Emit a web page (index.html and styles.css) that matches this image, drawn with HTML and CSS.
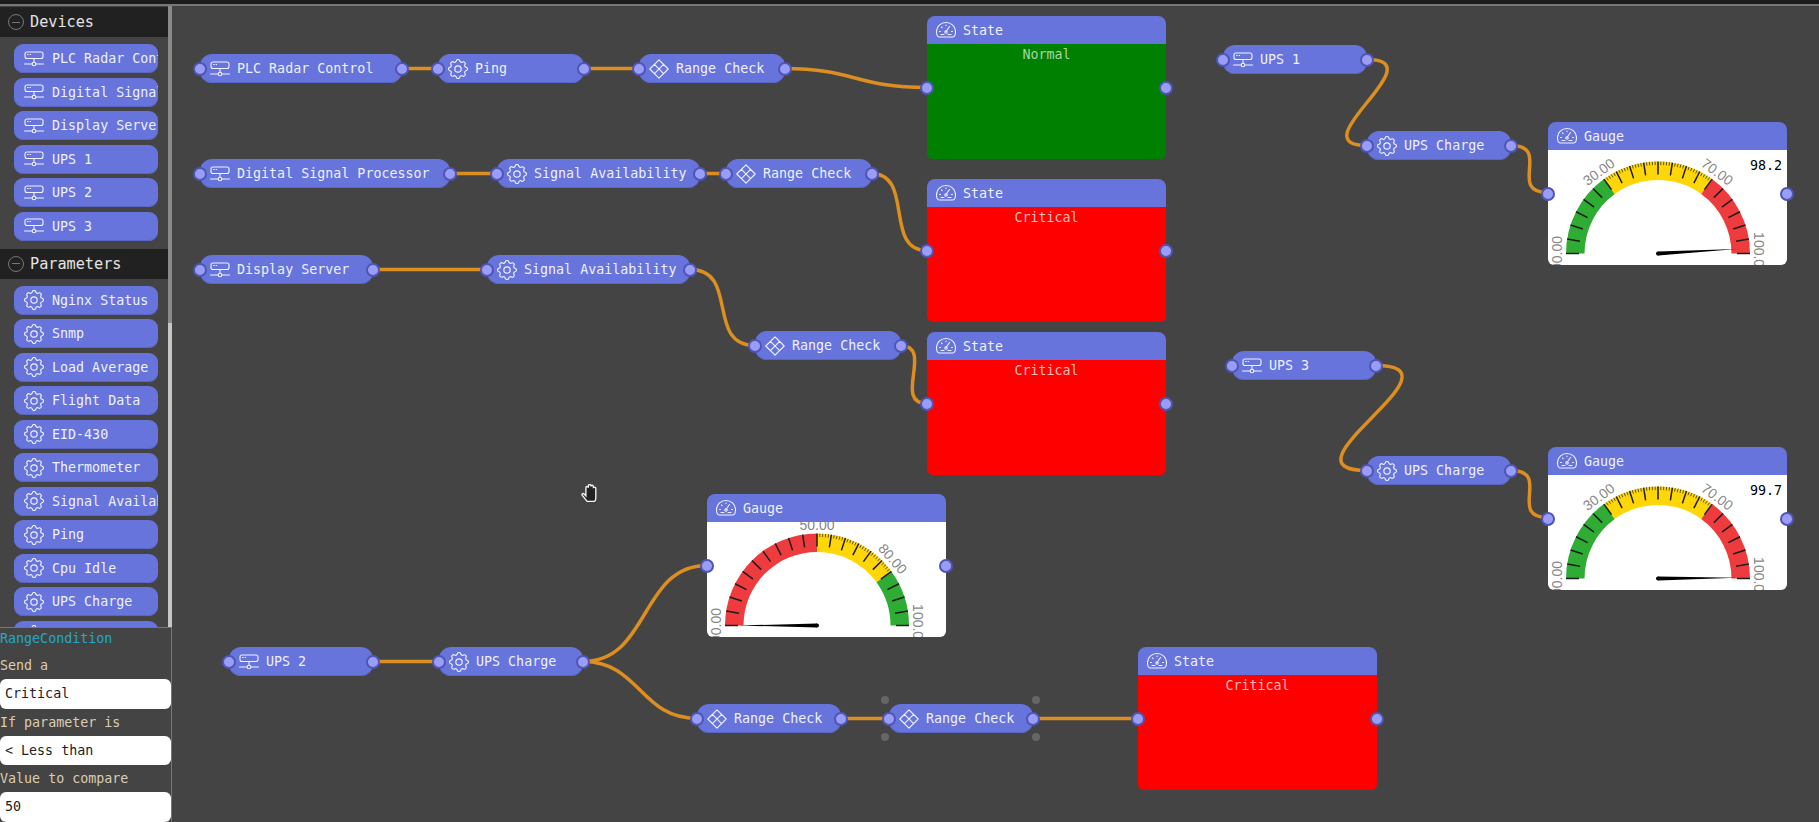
FILE: index.html
```html
<!DOCTYPE html>
<html lang="en">
<head>
    <meta charset="UTF-8">
    <title>Flow Editor</title>
    <link rel="stylesheet" href="styles.css">
</head>
<body>
    <!-- shared icons -->
    <svg class="icon-defs" aria-hidden="true">
        <symbol id="i-server" viewBox="0 0 20 20">
            <rect x="1" y="3" width="18" height="6.5" rx="2"/>
            <path d="M3.5 5.5h.6M6 5.5h.6M10 9.5v4M.5 15H8M12 15h7.5"/>
            <circle cx="10" cy="15" r="1.8"/>
        </symbol>
        <symbol id="i-gear" viewBox="2.5 2.5 19 19">
            <path d="M10.325 4.317c.426-1.756 2.924-1.756 3.35 0a1.724 1.724 0 0 0 2.573 1.066c1.543-.94 3.31.826 2.37 2.37a1.724 1.724 0 0 0 1.065 2.572c1.756.426 1.756 2.924 0 3.35a1.724 1.724 0 0 0-1.066 2.573c.94 1.543-.826 3.31-2.37 2.37a1.724 1.724 0 0 0-2.572 1.065c-.426 1.756-2.924 1.756-3.35 0a1.724 1.724 0 0 0-2.573-1.066c-1.543.94-3.31-.826-2.37-2.37a1.724 1.724 0 0 0-1.065-2.572c-1.756-.426-1.756-2.924 0-3.35a1.724 1.724 0 0 0 1.066-2.573c-.94-1.543.826-3.31 2.37-2.37c1 .608 2.296.07 2.572-1.065z"/>
            <circle cx="12" cy="12" r="3"/>
        </symbol>
        <symbol id="i-range" viewBox="0 0 20 20">
            <path d="M10 .8L19.2 10L10 19.2L.8 10zM5.4 5.4L14.6 14.6M14.6 5.4L5.4 14.6"/>
        </symbol>
        <symbol id="i-gauge" viewBox="0 0 20 20">
            <path d="M3.5 17H16.5C18.5 17 19.5 14 19.5 11.5A9.5 9 0 0 0 .5 11.5C.5 14 1.5 17 3.5 17z"/>
            <path d="M10 11.5L13.5 6.5M3.5 11.5h1M15.5 11.5h1M5.5 7l.6.6M10 5v.6M5 14.5h3M12 14.5h3"/>
            <circle cx="10" cy="12" r="1.2"/>
        </symbol>
    </svg>

    <div class="topbar"></div>

    <div class="workspace">
        <div class="side">
            <div class="palette">
                <div class="palette-list">
                    <div class="group-head"><span class="collapse"></span>Devices</div>
                    <div class="group-items">
                        <div class="item"><svg class="icon"><use href="#i-server"/></svg><span>PLC Radar Control</span></div>
                        <div class="item"><svg class="icon"><use href="#i-server"/></svg><span>Digital Signal Processor</span></div>
                        <div class="item"><svg class="icon"><use href="#i-server"/></svg><span>Display Server</span></div>
                        <div class="item"><svg class="icon"><use href="#i-server"/></svg><span>UPS 1</span></div>
                        <div class="item"><svg class="icon"><use href="#i-server"/></svg><span>UPS 2</span></div>
                        <div class="item"><svg class="icon"><use href="#i-server"/></svg><span>UPS 3</span></div>
                    </div>
                    <div class="group-head"><span class="collapse"></span>Parameters</div>
                    <div class="group-items">
                        <div class="item"><svg class="icon"><use href="#i-gear"/></svg><span>Nginx Status</span></div>
                        <div class="item"><svg class="icon"><use href="#i-gear"/></svg><span>Snmp</span></div>
                        <div class="item"><svg class="icon"><use href="#i-gear"/></svg><span>Load Average</span></div>
                        <div class="item"><svg class="icon"><use href="#i-gear"/></svg><span>Flight Data</span></div>
                        <div class="item"><svg class="icon"><use href="#i-gear"/></svg><span>EID-430</span></div>
                        <div class="item"><svg class="icon"><use href="#i-gear"/></svg><span>Thermometer</span></div>
                        <div class="item"><svg class="icon"><use href="#i-gear"/></svg><span>Signal Availability</span></div>
                        <div class="item"><svg class="icon"><use href="#i-gear"/></svg><span>Ping</span></div>
                        <div class="item"><svg class="icon"><use href="#i-gear"/></svg><span>Cpu Idle</span></div>
                        <div class="item"><svg class="icon"><use href="#i-gear"/></svg><span>UPS Charge</span></div>
                        <div class="item"><svg class="icon"><use href="#i-gear"/></svg></div>
                    </div>
                </div>
                <div class="scrollbar">
                    <div class="scroll-top"></div>
                    <div class="scroll-rest"></div>
                </div>
            </div>

            <div class="props">
                <div class="props-title">RangeCondition</div>
                <div class="props-label">Send a</div>
                <div class="props-field">Critical</div>
                <div class="props-label">If parameter is</div>
                <div class="props-field">&lt; Less than</div>
                <div class="props-label">Value to compare</div>
                <div class="props-field">50</div>
            </div>
        </div>

        <div class="canvas">
            <!-- viewBox is in page coordinates, the canvas starts at 172,6 -->
            <svg class="wires" viewBox="172 6 1647 816">
                <path d="M402 68.5H438"/>
                <path d="M584 68.5H639"/>
                <path d="M784 68.5C855 68.5 855 87.5 927 87.5"/>
                <path d="M450 173.5H497"/>
                <path d="M700 173.5H726"/>
                <path d="M871 173.5C915 173.5 883 250.5 927 250.5"/>
                <path d="M373 269.5H487"/>
                <path d="M690 269.5C740 269.5 705 345.5 755 345.5"/>
                <path d="M900 345.5C935 345.5 892 403.5 927 403.5"/>
                <path d="M1367 59.5C1437 59.5 1297 145.5 1367 145.5"/>
                <path d="M1511 145.5C1552 145.5 1507 192.5 1548 192.5"/>
                <path d="M1376 365.5C1470 365.5 1273 470.5 1367 470.5"/>
                <path d="M1511 470.5C1552 470.5 1507 517.5 1548 517.5"/>
                <path d="M373 661.5H439"/>
                <path d="M583 661.5C650 661.5 640 565.5 707 565.5"/>
                <path d="M583 661.5C640 661.5 640 718.5 697 718.5"/>
                <path d="M841 718.5H889"/>
                <path d="M1033 718.5H1138"/>
            </svg>

            <div class="node n-plc"><i class="port port-in"></i><svg class="icon"><use href="#i-server"/></svg><span>PLC Radar Control</span><i class="port port-out"></i></div>
            <div class="node n-ping"><i class="port port-in"></i><svg class="icon"><use href="#i-gear"/></svg><span>Ping</span><i class="port port-out"></i></div>
            <div class="node n-rc1"><i class="port port-in"></i><svg class="icon"><use href="#i-range"/></svg><span>Range Check</span><i class="port port-out"></i></div>

            <div class="node n-dsp"><i class="port port-in"></i><svg class="icon"><use href="#i-server"/></svg><span>Digital Signal Processor</span><i class="port port-out"></i></div>
            <div class="node n-sa1"><i class="port port-in"></i><svg class="icon"><use href="#i-gear"/></svg><span>Signal Availability</span><i class="port port-out"></i></div>
            <div class="node n-rc2"><i class="port port-in"></i><svg class="icon"><use href="#i-range"/></svg><span>Range Check</span><i class="port port-out"></i></div>

            <div class="node n-ds"><i class="port port-in"></i><svg class="icon"><use href="#i-server"/></svg><span>Display Server</span><i class="port port-out"></i></div>
            <div class="node n-sa2"><i class="port port-in"></i><svg class="icon"><use href="#i-gear"/></svg><span>Signal Availability</span><i class="port port-out"></i></div>
            <div class="node n-rc3"><i class="port port-in"></i><svg class="icon"><use href="#i-range"/></svg><span>Range Check</span><i class="port port-out"></i></div>

            <div class="node n-ups1"><i class="port port-in"></i><svg class="icon"><use href="#i-server"/></svg><span>UPS 1</span><i class="port port-out"></i></div>
            <div class="node n-chg1"><i class="port port-in"></i><svg class="icon"><use href="#i-gear"/></svg><span>UPS Charge</span><i class="port port-out"></i></div>
            <div class="node n-ups3"><i class="port port-in"></i><svg class="icon"><use href="#i-server"/></svg><span>UPS 3</span><i class="port port-out"></i></div>
            <div class="node n-chg2"><i class="port port-in"></i><svg class="icon"><use href="#i-gear"/></svg><span>UPS Charge</span><i class="port port-out"></i></div>

            <div class="node n-ups2"><i class="port port-in"></i><svg class="icon"><use href="#i-server"/></svg><span>UPS 2</span><i class="port port-out"></i></div>
            <div class="node n-chg3"><i class="port port-in"></i><svg class="icon"><use href="#i-gear"/></svg><span>UPS Charge</span><i class="port port-out"></i></div>
            <div class="node n-rc4"><i class="port port-in"></i><svg class="icon"><use href="#i-range"/></svg><span>Range Check</span><i class="port port-out"></i></div>
            <div class="node n-rc5">
                <i class="port port-in"></i><svg class="icon"><use href="#i-range"/></svg><span>Range Check</span><i class="port port-out"></i>
                <i class="grip grip-tl"></i><i class="grip grip-tr"></i><i class="grip grip-bl"></i><i class="grip grip-br"></i>
            </div>

            <div class="card n-state1">
                <div class="card-head"><svg class="icon"><use href="#i-gauge"/></svg><span>State</span></div>
                <div class="card-body state-normal">Normal</div>
                <i class="port port-in"></i><i class="port port-out"></i>
            </div>
            <div class="card n-state2">
                <div class="card-head"><svg class="icon"><use href="#i-gauge"/></svg><span>State</span></div>
                <div class="card-body state-critical">Critical</div>
                <i class="port port-in"></i><i class="port port-out"></i>
            </div>
            <div class="card n-state3">
                <div class="card-head"><svg class="icon"><use href="#i-gauge"/></svg><span>State</span></div>
                <div class="card-body state-critical">Critical</div>
                <i class="port port-in"></i><i class="port port-out"></i>
            </div>
            <div class="card n-state4">
                <div class="card-head"><svg class="icon"><use href="#i-gauge"/></svg><span>State</span></div>
                <div class="card-body state-critical">Critical</div>
                <i class="port port-in"></i><i class="port port-out"></i>
            </div>

            <div class="card n-gauge1">
                <div class="card-head"><svg class="icon"><use href="#i-gauge"/></svg><span>Gauge</span></div>
                <svg class="gauge" id="gauge1"></svg>
                <i class="port port-in"></i><i class="port port-out"></i>
            </div>
            <div class="card n-gauge2">
                <div class="card-head"><svg class="icon"><use href="#i-gauge"/></svg><span>Gauge</span></div>
                <svg class="gauge" id="gauge2"></svg>
                <i class="port port-in"></i><i class="port port-out"></i>
            </div>
            <div class="card n-gauge3">
                <div class="card-head"><svg class="icon"><use href="#i-gauge"/></svg><span>Gauge</span></div>
                <svg class="gauge" id="gauge3"></svg>
                <i class="port port-in"></i><i class="port port-out"></i>
            </div>

            <!-- mouse pointer over the canvas -->
            <svg class="hand" viewBox="1 1.5 12 14.5">
                <path d="M5.5 15.5L1.5 10.5C1 9.5 2.2 8.7 3 9.5L4.5 11V4.5a1 1 0 0 1 2 0V3a1 1 0 0 1 2 0V3.5a1 1 0 0 1 2 0V5a1 1 0 0 1 2 0V11.5C12.5 13.5 12 15.5 11 15.5z"/>
            </svg>
        </div>
    </div>

    <script src="script.js"></script>
</body>
</html>
```

FILE: styles.css
```css
* {
    box-sizing: border-box;
}

body {
    margin: 0;
    height: 822px;
    overflow: hidden;
    display: flex;
    flex-direction: column;
    background-color: #444;
    font-family: "DejaVu Sans Mono", "Liberation Mono", monospace;
    font-size: 13.33px;
    color: #eef0ff;
}

.icon-defs {
    display: none;
}

.topbar {
    flex: 0 0 6px;
    background-color: #1c1c1c;
    border-bottom: 2px solid #777;
}

.workspace {
    flex: 1;
    display: flex;
    min-height: 0;
}

/* left column */
.side {
    flex: 0 0 172px;
    width: 172px;
    min-width: 0;
    display: flex;
    flex-direction: column;
}

.palette {
    flex: 1;
    display: flex;
    min-height: 0;
}

.palette-list {
    flex: 0 0 168px;
    width: 168px;
    overflow: hidden;
    padding-top: 1px;
}

.scrollbar {
    flex: 0 0 4px;
    display: flex;
    flex-direction: column;
}

.scroll-top {
    flex: 0 0 317px;
    background-color: #8a8a8a;
}

.scroll-rest {
    flex: 1;
    background-color: #c6c6c6;
}

.group-head {
    height: 30px;
    display: flex;
    align-items: center;
    gap: 6px;
    padding-left: 8px;
    background-color: #212121;
    font-size: 15.2px;
    color: #e4e4e4;
}

.collapse {
    width: 16px;
    height: 16px;
    border: 1px solid #777;
    border-radius: 50%;
    position: relative;
}

.collapse::after {
    content: "";
    position: absolute;
    left: 3px;
    right: 3px;
    top: 6.5px;
    height: 1px;
    background-color: #777;
}

.group-items {
    display: flex;
    flex-direction: column;
    gap: 4.5px;
    padding: 7px 10px 8px 14px;
}

.item {
    flex: 0 0 29px;
    display: flex;
    align-items: center;
    gap: 8px;
    padding-left: 10px;
    border-radius: 9px;
    background-color: #6674dc;
    box-shadow: inset 0 -1px 0 #5a66c4;
    white-space: nowrap;
    overflow: hidden;
}

.icon {
    flex: 0 0 20px;
    width: 20px;
    height: 20px;
    fill: none;
    stroke: #f1f2ff;
    stroke-width: 1.1;
    stroke-linejoin: round;
    stroke-linecap: round;
}

/* properties panel */
.props {
    flex: 0 0 195px;
    width: 172px;
    border-top: 1px solid #777;
    border-right: 1px solid #777;
    background-color: #444;
}

.props-title {
    height: 24px;
    line-height: 22px;
    color: #25a8c6;
}

.props-label {
    height: 27px;
    line-height: 27px;
    color: #dccdb0;
}

.props-field {
    height: 29.5px;
    line-height: 29.5px;
    padding-left: 5px;
    border-radius: 6px;
    background-color: #fff;
    color: #222;
}

/* diagram */
.canvas {
    flex: 1;
    min-width: 0;
    position: relative;
    overflow: hidden;
}

.wires {
    position: absolute;
    left: 0;
    top: 0;
    width: 100%;
    height: 100%;
    fill: none;
    stroke: #dc8e20;
    stroke-width: 3.5;
}

.node {
    position: absolute;
    height: 29px;
    display: flex;
    align-items: center;
    gap: 7px;
    padding-left: 10px;
    border-radius: 12px;
    background-color: #6674dc;
    box-shadow: inset 0 -1px 0 #5a66c4;
    white-space: nowrap;
}

.port {
    position: absolute;
    top: 50%;
    width: 14px;
    height: 14px;
    margin-top: -7px;
    border-radius: 50%;
    background-color: #9a9df8;
    border: 2px solid #4d55b5;
}

.port-in {
    left: -7px;
}

.port-out {
    right: -7px;
}

.grip {
    position: absolute;
    width: 8px;
    height: 8px;
    border-radius: 50%;
    background-color: #666;
}

.grip-tl { left: -8px; top: -8px; }
.grip-tr { right: -7px; top: -8px; }
.grip-bl { left: -8px; bottom: -8px; }
.grip-br { right: -7px; bottom: -8px; }

.n-plc  { left: 28px;  top: 48px;  width: 202px; }
.n-ping { left: 266px; top: 48px;  width: 146px; }
.n-rc1  { left: 467px; top: 48px;  width: 146px; }
.n-dsp  { left: 28px;  top: 153px; width: 250px; }
.n-sa1  { left: 325px; top: 153px; width: 203px; }
.n-rc2  { left: 554px; top: 153px; width: 146px; }
.n-ds   { left: 28px;  top: 249px; width: 173px; }
.n-sa2  { left: 315px; top: 249px; width: 203px; }
.n-rc3  { left: 583px; top: 325px; width: 146px; }
.n-ups1 { left: 1051px; top: 39px;  width: 144px; }
.n-chg1 { left: 1195px; top: 125px; width: 144px; }
.n-ups3 { left: 1060px; top: 345px; width: 144px; }
.n-chg2 { left: 1195px; top: 450px; width: 144px; }
.n-ups2 { left: 57px;  top: 641px; width: 144px; }
.n-chg3 { left: 267px; top: 641px; width: 144px; }
.n-rc4  { left: 525px; top: 698px; width: 144px; }
.n-rc5  { left: 717px; top: 698px; width: 144px; }

.card {
    position: absolute;
    width: 239px;
    height: 143px;
    display: flex;
    flex-direction: column;
}

.card-head {
    flex: 0 0 28px;
    display: flex;
    align-items: center;
    gap: 7px;
    padding-left: 9px;
    border-radius: 8px 8px 0 0;
    background-color: #6674dc;
}

.card-body {
    flex: 1;
    text-align: center;
    line-height: 22px;
    border-radius: 0 0 6px 6px;
}

.state-normal {
    background-color: #008000;
    color: #a5d8a5;
}

.state-critical {
    background-color: #ff0000;
    color: #ffbcbc;
}

.gauge {
    flex: 1;
    width: 100%;
    min-height: 0;
    border-radius: 0 0 6px 6px;
    background-color: #fff;
    font-family: "Liberation Sans", sans-serif;
}

.gauge-label {
    font-size: 14px;
    fill: #888;
    text-anchor: middle;
    dominant-baseline: central;
}

.gauge-value {
    font-family: "DejaVu Sans Mono", monospace;
    font-size: 13.33px;
    fill: #000;
    text-anchor: end;
}

.n-state1 { left: 755px; top: 10px; }
.n-state2 { left: 755px; top: 173px; }
.n-state3 { left: 755px; top: 326px; }
.n-state4 { left: 966px; top: 641px; }
.n-gauge1 { left: 1376px; top: 116px; }
.n-gauge2 { left: 1376px; top: 441px; }
.n-gauge3 { left: 535px; top: 488px; }

.hand {
    position: absolute;
    left: 409px;
    top: 478px;
    width: 16px;
    height: 18px;
    fill: #222;
    stroke: #f4f4f4;
    stroke-width: 1.1;
}
```

FILE: script.js
```js
// Draws the three half circle gauges
const GREEN = '#2eac34';
const YELLOW = '#ffd608';
const RED = '#ee3c3e';
const SVG_NS = 'http://www.w3.org/2000/svg';

// labels are [value, where it sits on the arc]
const gauges = [
    { id: 'gauge1', value: 98.2, text: '98.2', labels: [[0, 0], [30, 30], [70, 70], [100, 100]],
      bands: [[0, 30, GREEN], [30, 70, YELLOW], [70, 100, RED]], minor: [30, 70] },
    { id: 'gauge2', value: 99.7, text: '99.7', labels: [[0, 0], [30, 30], [70, 70], [100, 100]],
      bands: [[0, 30, GREEN], [30, 70, YELLOW], [70, 100, RED]], minor: [30, 70] },
    { id: 'gauge3', value: 0, text: '', labels: [[0, 0], [50, 50], [80, 77], [100, 100]],
      bands: [[0, 50, RED], [50, 80, YELLOW], [80, 100, GREEN]], minor: [50, 80] }
];

const CX = 110;
const CY = 103.5;
const OUTER = 92;
const INNER = 73.5;

// value 0 is on the left, value 100 on the right
function point(value, radius) {
    const a = value / 100 * Math.PI;
    return [CX - radius * Math.cos(a), CY - radius * Math.sin(a)];
}

function add(svg, name, attrs, text) {
    const el = document.createElementNS(SVG_NS, name);
    for (const key in attrs) el.setAttribute(key, attrs[key]);
    if (text) el.textContent = text;
    svg.appendChild(el);
}

function tick(svg, value, from, to, width) {
    const p1 = point(value, from);
    const p2 = point(value, to);
    add(svg, 'line', { x1: p1[0], y1: p1[1], x2: p2[0], y2: p2[1], stroke: '#1c1c1c', 'stroke-width': width });
}

function drawGauge(g) {
    const svg = document.getElementById(g.id);

    g.bands.forEach(function (band) {
        const a = point(band[0], OUTER);
        const b = point(band[1], OUTER);
        const c = point(band[1], INNER);
        const d = point(band[0], INNER);
        add(svg, 'path', {
            d: `M${a} A${OUTER} ${OUTER} 0 0 1 ${b} L${c} A${INNER} ${INNER} 0 0 0 ${d} Z`,
            fill: band[2]
        });
    });

    for (let v = 0; v <= 100; v += 5) tick(svg, v, 79, OUTER, 1.5);
    for (let v = g.minor[0]; v < g.minor[1]; v += 1) {
        if (v % 5 !== 0) tick(svg, v, 88.5, OUTER, 0.7);
    }

    g.labels.forEach(function (label) {
        const p = point(label[1], 101);
        const rot = label[1] / 100 * 180 - 90;
        add(svg, 'text', {
            class: 'gauge-label',
            transform: `translate(${p[0]} ${p[1]}) rotate(${rot})`
        }, (label[0] < 10 ? '0' : '') + label[0].toFixed(2));
    });

    // needle
    const tip = point(g.value, 79);
    const s1 = point(g.value + 50, 2);
    const s2 = point(g.value - 50, 2);
    add(svg, 'path', { d: `M${s1} L${tip} L${s2} Z`, fill: '#000' });
    add(svg, 'circle', { cx: CX, cy: CY, r: 2, fill: '#000' });

    if (g.text) add(svg, 'text', { class: 'gauge-value', x: 234, y: 20 }, g.text);
}

gauges.forEach(drawGauge);
```
